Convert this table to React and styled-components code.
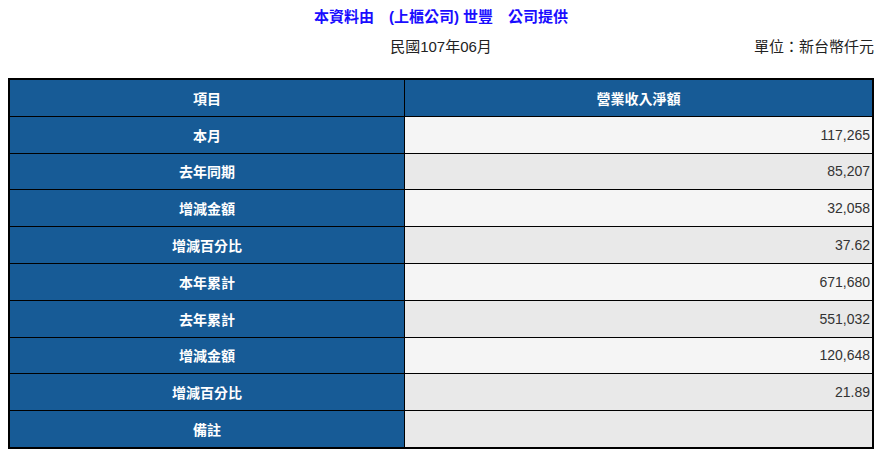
import React from "react";
import styled, { createGlobalStyle } from "styled-components";

const GlobalStyle = createGlobalStyle`
  body {
    margin: 8px;
    background: #fff;
    font-family: "Liberation Sans", Arial, "Noto Sans CJK TC", sans-serif;
  }
`;

const Wrapper = styled.div`
  width: 866px;
`;

const Title = styled.div`
  text-align: center;
  color: #1a0dff;
  font-weight: bold;
  font-size: 15px;
  line-height: 18px;
  white-space: pre;
`;

const InfoRow = styled.div`
  display: grid;
  grid-template-columns: 1fr auto 1fr;
  align-items: center;
  margin-top: 12px;
  font-size: 15px;
  line-height: 18px;
  color: #222;
`;

const DateText = styled.div`
  text-align: center;
`;

const Unit = styled.div`
  text-align: right;
`;

const Table = styled.table`
  margin-top: 22px;
  width: 866px;
  border-collapse: collapse;
  border: 2px solid #000;
`;

const HeadCell = styled.th`
  background: #175b96;
  color: #fff;
  font-weight: bold;
  font-size: 14px;
  height: 35.8px;
  padding: 0;
  border: 1px solid #000;
  text-align: center;
  width: ${(p) => p.$width || "auto"};
`;

const ValueCell = styled.td`
  background: ${(p) => (p.$alt ? "#e9e9e9" : "#f5f5f5")};
  color: #333;
  font-size: 14px;
  height: 35.8px;
  padding: 0 2px 0 0;
  border: 1px solid #000;
  text-align: right;
`;

const rows = [
  ["本月", "117,265"],
  ["去年同期", "85,207"],
  ["增減金額", "32,058"],
  ["增減百分比", "37.62"],
  ["本年累計", "671,680"],
  ["去年累計", "551,032"],
  ["增減金額", "120,648"],
  ["增減百分比", "21.89"],
  ["備註", ""],
];

const App = () => {
  return (
    <Wrapper>
      <GlobalStyle />
      <Title>本資料由　(上櫃公司) 世豐　公司提供</Title>
      <InfoRow>
        <div />
        <DateText>民國107年06月</DateText>
        <Unit>單位：新台幣仟元</Unit>
      </InfoRow>
      <Table>
        <tbody>
          <tr>
            <HeadCell $width="394px">項目</HeadCell>
            <HeadCell>營業收入淨額</HeadCell>
          </tr>
          {rows.map(([label, value], i) => (
            <tr key={i}>
              <HeadCell>{label}</HeadCell>
              <ValueCell $alt={i % 2 === 1 || i === rows.length - 1}>{value}</ValueCell>
            </tr>
          ))}
        </tbody>
      </Table>
    </Wrapper>
  );
};

export default App;
